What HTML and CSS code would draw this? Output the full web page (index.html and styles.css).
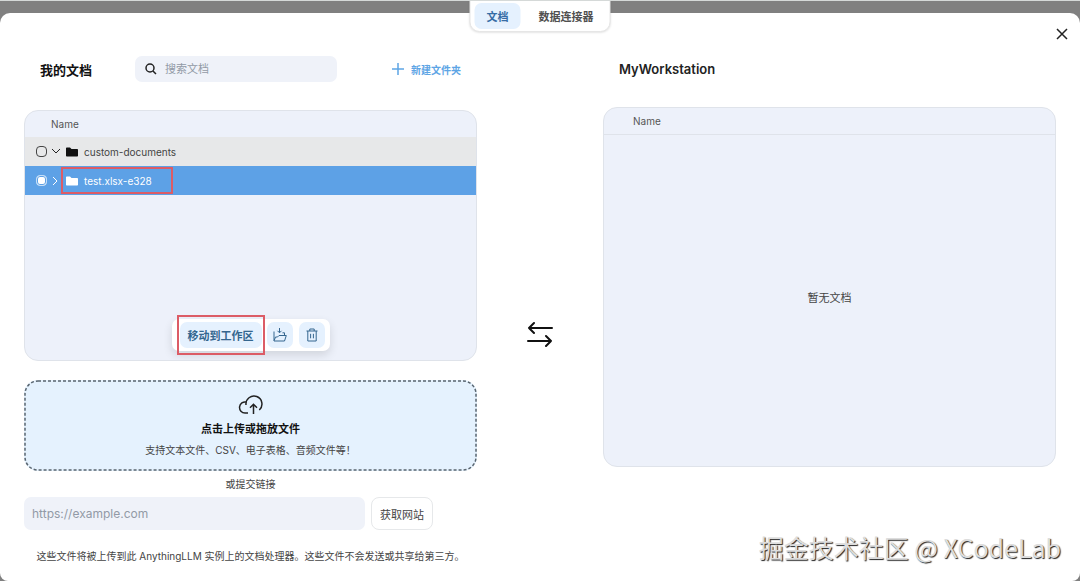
FILE: index.html
```html
<!DOCTYPE html>
<html lang="zh-CN">

<head>
  <meta charset="UTF-8">
  <meta name="viewport" content="width=device-width, initial-scale=1.0">
  <title>MyWorkstation</title>
  <link rel="stylesheet" href="styles.css">
</head>

<body>

  <div class="modal">
    <div class="tabs">
      <button type="button" class="tab active">文档</button>
      <button type="button" class="tab">数据连接器</button>
    </div>

    <button type="button" class="close" aria-label="关闭">
      <svg width="12" height="12" viewBox="0 0 12 12"><path d="M1 1l10 10M11 1L1 11"/></svg>
    </button>

    <div class="columns">
      <section class="documents">
        <div class="column-head">
          <h3>我的文档</h3>
          <label class="search">
            <svg width="12" height="12" viewBox="0 0 12 12"><circle cx="5" cy="5" r="4"/><path d="M8 8l3 3"/></svg>
            <input type="search" placeholder="搜索文档" aria-label="搜索文档">
          </label>
          <button type="button" class="new-folder">
            <svg width="12" height="12" viewBox="0 0 12 12"><path d="M6 0v12M0 6h12"/></svg>
            新建文件夹
          </button>
        </div>

        <div class="panel file-panel">
          <table class="files">
            <thead>
              <tr><th>Name</th></tr>
            </thead>
            <tbody>
              <tr class="folder">
                <td>
                  <div class="cell">
                    <input type="checkbox" class="check" id="custom">
                    <svg class="caret" width="10" height="10" viewBox="0 0 10 10"><path d="M1 2l4 4 4-4"/></svg>
                    <label for="custom" class="name">
                      <svg width="12" height="10" viewBox="0 0 12 10"><path d="M0 1.2Q0 .5 .8 .5H4L5.5 2H11.2Q12 2 12 2.8V8.7Q12 9.5 11.2 9.5H.8Q0 9.5 0 8.7z"/></svg>
                      custom-documents
                    </label>
                  </div>
                </td>
              </tr>
              <tr class="folder selected">
                <td>
                  <div class="cell">
                    <input type="checkbox" class="check" id="test" checked>
                    <svg class="caret" width="10" height="10" viewBox="0 0 10 10"><path d="M2 1l4 4-4 4"/></svg>
                    <label for="test" class="name marked">
                      <svg width="12" height="10" viewBox="0 0 12 10"><path d="M0 1.2Q0 .5 .8 .5H4L5.5 2H11.2Q12 2 12 2.8V8.7Q12 9.5 11.2 9.5H.8Q0 9.5 0 8.7z"/></svg>
                      test.xlsx-e328
                    </label>
                  </div>
                </td>
              </tr>
            </tbody>
          </table>

          <div class="actions">
            <div class="marked">
              <button type="button" class="move">移动到工作区</button>
            </div>
            <button type="button" class="action" aria-label="移动到文件夹">
              <svg width="14" height="14" viewBox="0 0 14 14"><path d="M6.500 0v4.500M4.500 2.800l2 2 2-2M1 3.500v9.500h10.500l1.800-5.500H6L4.500 9H2.500L1.200 12.500M9.500 4.800H11.500V7.500"/></svg>
            </button>
            <button type="button" class="action" aria-label="删除">
              <svg width="14" height="14" viewBox="0 0 14 14"><path d="M1.500 3h11M4.800 3V1h4.400v2M2.800 3v10h8.400V3M5.600 5.800v4.500M8.400 5.800v4.500"/></svg>
            </button>
          </div>
        </div>

        <button type="button" class="upload">
          <svg class="outline"><rect x="1" y="1" rx="13"/></svg>
          <svg width="26" height="20" viewBox="0 0 26 20"><path d="M10 18H7A5.500 5.500 0 1 1 8.300 7.150M8 10a8 8 0 1 1 13.300 5M15.500 19V9.500M12 12.800l3.500-3.500 3.500 3.500"/></svg>
          <strong>点击上传或拖放文件</strong>
          <span>支持文本文件、CSV、电子表格、音频文件等！</span>
        </button>

        <p class="or">或提交链接</p>

        <form class="link-form">
          <input type="url" placeholder="https://example.com" aria-label="链接">
          <button type="submit">获取网站</button>
        </form>

        <p class="note">这些文件将被上传到此 AnythingLLM 实例上的文档处理器。这些文件不会发送或共享给第三方。</p>
      </section>

      <div class="swap">
        <svg width="26" height="26" viewBox="0 0 26 26"><path d="M25 7H2M7 2L2 7l5 5M1 20h23M19 15l5 5-5 5"/></svg>
      </div>

      <section class="workspace">
        <div class="column-head">
          <h3>MyWorkstation</h3>
        </div>
        <div class="panel workspace-panel">
          <table class="files">
            <thead>
              <tr><th>Name</th></tr>
            </thead>
          </table>
          <p class="empty">暂无文档</p>
        </div>
      </section>
    </div>
  </div>

  <div class="watermark">掘金技术社区 @ XCodeLab</div>

</body>

</html>
```

FILE: styles.css
```css
* {
  box-sizing: border-box;
}

body {
  margin: 0;
  padding-top: 12px;
  min-height: 100vh;
  display: flex;
  background: #808080;
  border-top: 1px solid #d5d9d8;
  color: #222;
  font-family: Inter, "Noto Sans CJK SC", sans-serif;
  font-size: 10px;
  overflow: hidden;
}

button,
input {
  font: inherit;
  color: inherit;
}

button {
  border: 0;
  padding: 0;
  background: none;
  cursor: pointer;
}

h3,
p {
  margin: 0;
}

svg {
  flex: none;
  fill: none;
  stroke: currentColor;
}

.modal {
  position: relative;
  flex: 1;
  padding: 43px 24px 0;
  background: #fff;
  border-radius: 10px 10px 8px 8px;
}

/* Tabs hang over the top edge of the modal */
.tabs {
  position: absolute;
  top: -13px;
  left: 50%;
  transform: translateX(-50%);
  display: flex;
  gap: 6px;
  padding: 2px 4px;
  background: #fff;
  border: 1px solid #e6e6e6;
  border-radius: 0 0 10px 10px;
  box-shadow: 0 1px 2px rgba(0, 0, 0, 0.1);
}

.tab {
  height: 26px;
  padding: 0 12px;
  border-radius: 7px;
  color: #505050;
  font-size: 11px;
  font-weight: 700;
  white-space: nowrap;
}

.tab.active {
  background: #e5f1fe;
  color: #376da5;
}

.close {
  position: absolute;
  top: 15px;
  right: 12px;
  width: 12px;
  height: 12px;
}

.close svg {
  display: block;
  stroke-width: 1.5;
}

.columns {
  display: grid;
  grid-template-columns: 1fr 126px 1fr;
  align-items: start;
}

.column-head {
  display: flex;
  align-items: center;
  justify-content: space-between;
  height: 26px;
  padding: 0 16px;
}

.column-head h3 {
  font-size: 13px;
  font-weight: 600;
}

.documents h3 {
  font-weight: 700;
  color: #111;
}

.search {
  display: flex;
  align-items: center;
  gap: 8px;
  width: 202px;
  height: 26px;
  margin-right: 12px;
  padding: 0 10px;
  background: #eff2f9;
  border-radius: 7px;
}

.search svg {
  stroke-width: 1.5;
}

.search input {
  flex: 1;
  min-width: 0;
  padding: 0;
  border: 0;
  outline: 0;
  background: none;
  font-size: 11px;
}

input::placeholder {
  color: #929aa6;
}

.new-folder {
  display: flex;
  align-items: center;
  gap: 7px;
  color: #5da5e5;
  font-weight: 700;
}

.new-folder svg {
  stroke-width: 1.5;
}

.panel {
  position: relative;
  background: #edf1fa;
  border: 1px solid #dfe3ea;
  border-radius: 14px;
  overflow: hidden;
}

.file-panel {
  height: 251px;
  margin-top: 28px;
}

.workspace-panel {
  display: flex;
  flex-direction: column;
  height: 360px;
  margin-top: 25px;
}

.files {
  width: 100%;
  border-collapse: collapse;
}

.files th {
  height: 26px;
  padding: 0 26px;
  color: #555;
  font-weight: 400;
  text-align: left;
}

.workspace .files th {
  padding: 0 29px;
  border-bottom: 1px solid #dfe3ea;
}

.files td {
  padding: 0;
}

.cell {
  display: flex;
  align-items: center;
  height: 29px;
  padding-left: 11px;
}

.folder {
  background: #e7e8e9;
}

.folder .name {
  color: #444;
}

.folder .name svg {
  fill: #111;
  stroke: none;
}

.folder.selected {
  background: #5da1e6;
  color: #fff;
}

.folder.selected .name {
  color: #fff;
}

.folder.selected .name svg {
  fill: #fff;
}

.check {
  appearance: none;
  width: 11px;
  height: 11px;
  margin: 0 4px 0 0;
  border: 1px solid #444;
  border-radius: 4px;
}

.check:checked {
  border-color: #c4def7;
  background: #fff;
  box-shadow: inset 0 0 0 1px #5da1e6;
}

.name {
  display: flex;
  align-items: center;
  gap: 6px;
  height: 27px;
  padding: 0 19px 0 3px;
  border: 2px solid transparent;
}

.marked {
  border: 2px solid #dc5c66;
}

.actions {
  position: absolute;
  bottom: 9px;
  left: 50%;
  transform: translateX(-50%);
  display: flex;
  align-items: center;
  gap: 6px;
  height: 32px;
  padding: 0 5px;
  background: #fff;
  border-radius: 7px;
  box-shadow: 0 4px 10px rgba(0, 0, 0, 0.12);
}

.actions .marked {
  margin-right: -4px;
  padding: 5px 1px;
}

.move,
.action {
  height: 26px;
  background: #e5f1fe;
  border-radius: 7px;
  color: #34668f;
}

.move {
  display: block;
  padding: 0 8px;
  font-size: 11px;
  font-weight: 700;
  white-space: nowrap;
}

.action {
  display: flex;
  align-items: center;
  justify-content: center;
  width: 26px;
}

.upload {
  position: relative;
  display: flex;
  flex-direction: column;
  align-items: center;
  width: 100%;
  height: 91px;
  margin-top: 19px;
  padding-top: 15px;
  background: #e5f2fe;
  border-radius: 14px;
}

.upload svg {
  stroke-width: 1.5;
}

/* Dashed edge, with shorter dashes than a CSS border gives */
.upload .outline {
  position: absolute;
  inset: 0;
  width: 100%;
  height: 100%;
  color: #59656f;
  stroke-dasharray: 3 2;
}

.outline rect {
  width: calc(100% - 2px);
  height: calc(100% - 2px);
}

.upload strong {
  margin-top: 5px;
  font-size: 11px;
  line-height: 18px;
  color: #111;
}

.upload span {
  margin-top: 3px;
  line-height: 18px;
  color: #444;
}

.or {
  margin-top: 4px;
  line-height: 18px;
  text-align: center;
  color: #444;
}

.link-form {
  display: flex;
  gap: 6px;
  margin-top: 4px;
  padding-right: 44px;
}

.link-form input {
  flex: 1;
  min-width: 0;
  height: 33px;
  padding: 0 8px;
  background: #eff2f9;
  border: 0;
  border-radius: 7px;
  font-size: 12px;
}

.link-form button {
  height: 33px;
  padding: 0 8px;
  border: 1px solid #e6e8ea;
  border-radius: 8px;
  font-size: 11px;
  color: #444;
}

.note {
  margin-top: 17px;
  line-height: 18px;
  text-align: center;
  color: #444;
}

.swap {
  display: flex;
  justify-content: center;
  padding-top: 265px;
  color: #111;
}

.swap svg {
  stroke-width: 2;
  stroke-linecap: round;
  stroke-linejoin: round;
}

.empty {
  flex: 1;
  display: flex;
  align-items: center;
  justify-content: center;
  padding-bottom: 6px;
  font-size: 11px;
  color: #444;
}

.watermark {
  position: absolute;
  right: 19px;
  bottom: 16px;
  color: #ddd;
  font-family: "Noto Sans CJK SC", sans-serif;
  font-size: 25px;
  line-height: 36px;
  text-shadow: 1px 1px 1px #222;
}
```
